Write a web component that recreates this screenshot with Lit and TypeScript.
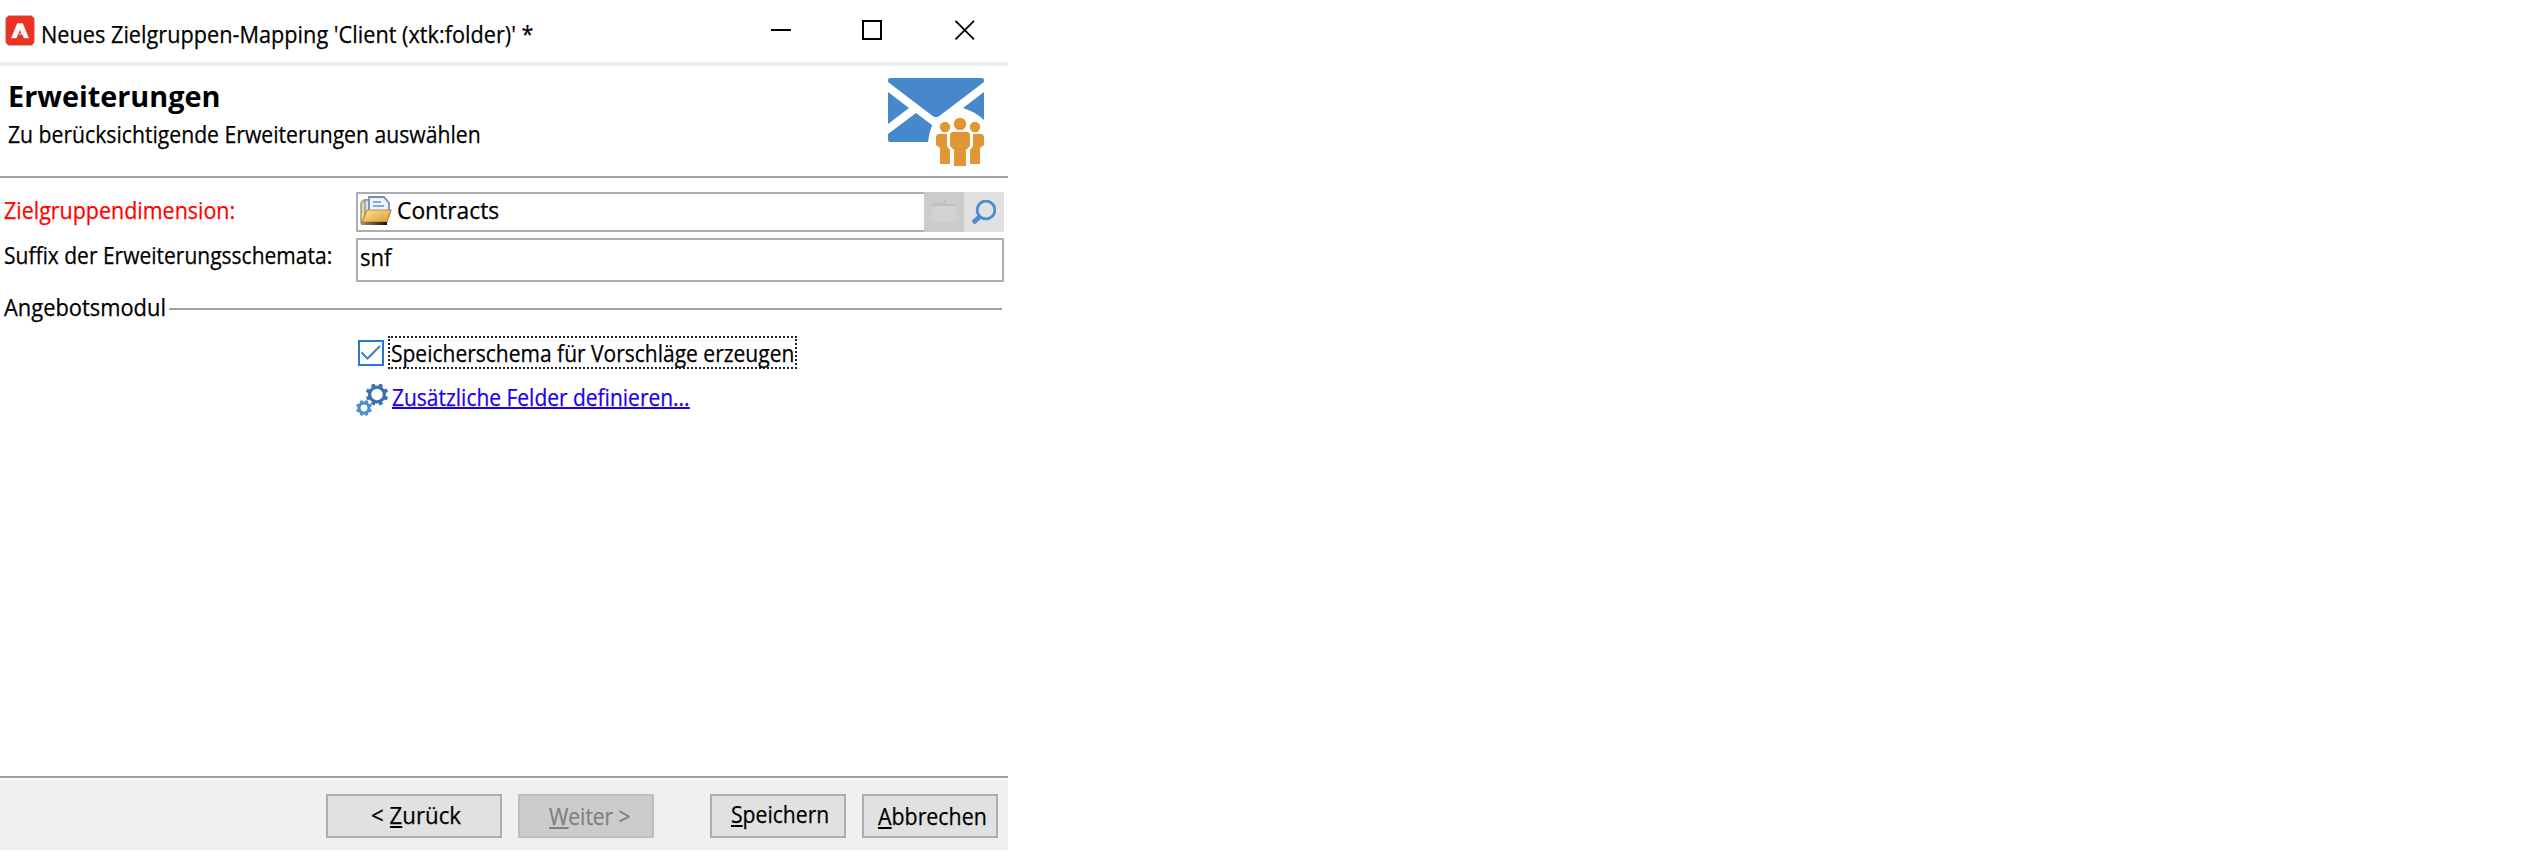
import { LitElement, html, css, svg } from "lit";
import { customElement, property, query } from "lit/decorators.js";

/** One line of text, condensed or widened to an exact measure. */
@customElement("fit-text")
class FitText extends LitElement {
  @property({ type: Number }) measure = 0;
  @query(".line") line!: HTMLElement;

  static styles = css`
    :host { display: block; flex: none; height: 32px; line-height: 32px; white-space: pre; }
    .line { display: inline-block; transform-origin: 0 0; white-space: pre; vertical-align: top; }
  `;

  updated() {
    this.style.width = `${this.measure}px`;
    this.line.style.transform = `scaleX(${this.measure / this.line.offsetWidth})`;
  }

  render() {
    return html`<span class="line"><slot></slot></span>`;
  }
}

const logo = svg`<svg class="logo" width="30" height="31" viewBox="0 0 30 31">
  <rect x="0.5" y="0.5" width="29" height="30" rx="4.500" fill="#ea3323" stroke="#dcaaa4"/>
  <path d="M12.300 8.500h5.400L23.500 23h-4.300l-1.700-3.800h-3.200l2.300-.8-1.600-3.900-3.700 8.500H6.500z" fill="#fff" stroke="#fff" stroke-opacity=".5" stroke-width=".8"/>
</svg>`;

const mail = svg`<svg class="mail" width="96" height="88" viewBox="0 0 96 88">
  <g fill="#4787cb">
    <path d="M2 0h92q2 0 2 2v2L50 39h-4L0 4V2q0-2 2-2z"/>
    <path d="M0 14l21 16L0 46z"/>
    <path d="M96 14L75 30q13 4 21 12z"/>
    <path d="M28 35l16 12q-3 8-4 17H2q-2 0-2-2v-6z"/>
  </g>
  <g fill="#e29535">
    <circle cx="72" cy="46" r="6.2"/><circle cx="57" cy="49" r="5.2"/><circle cx="87" cy="49" r="5.2"/>
    <path d="M64 54h16l2 2v12l-4 4v16H66V72l-4-4V56z"/>
    <path d="M50 56h9v12l3 4v14H52V70l-4-3v-9z"/>
    <path d="M94 56h-9v12l-3 4v14h10V70l4-3v-9z"/>
  </g>
</svg>`;

const folder = svg`<svg class="folder" width="32" height="30" viewBox="0 0 32 30">
  <defs>
    <linearGradient id="g" x1="0" y1="0" x2="1" y2="1"><stop offset="0" stop-color="#ffe696"/><stop offset="1" stop-color="#d59b36"/></linearGradient>
    <linearGradient id="s" x1="0" y1="0" x2="1" y2="0"><stop offset="0" stop-color="#a8905a"/><stop offset="1" stop-color="#16130c"/></linearGradient>
  </defs>
  <path d="M1 7l3-3h5v23H1z" fill="#e9d9a0" stroke="#9f9468" stroke-width="1.4"/>
  <path d="M5 4h6v18H5z" fill="#dfe6f2" stroke="#8797b0" stroke-width="1.4"/>
  <path d="M9 1h15l5 6v13H9z" fill="#eef4fc" stroke="#7d8ca6" stroke-width="1.8"/>
  <path d="M13 6h8M13 10h11" stroke="#86a7e8" stroke-width="1.8"/>
  <path d="M7 14h24l-4 12H2z" fill="url(#g)" stroke="#b98b3c" stroke-width="1.2"/>
  <path d="M1 26h26v3H1z" fill="url(#s)"/>
</svg>`;

const openFolder = svg`<svg width="24" height="24" viewBox="0 0 24 24">
  <path d="M0 2h12V0h2v4h10v2H0z" fill="#c0c0c0"/><path d="M0 2h12v2H0z" fill="#c6c6c6"/>
  <path d="M0 6h24v16H0z" fill="#d2d2d2"/>
</svg>`;

const lens = svg`<svg width="24" height="24" viewBox="0 0 24 24">
  <circle cx="14" cy="10" r="8.900" fill="none" stroke="#4c8cd0" stroke-width="2.8"/>
  <path d="M8.500 16l-7.500 6.800" stroke="#4c8cd0" stroke-width="4.800"/>
</svg>`;

const spokes = (cx: number, cy: number, r: number, w: number) =>
  [0, 1, 2, 3, 4, 5, 6, 7].map(
    (i) => svg`<rect x=${cx - w / 2} y=${cy - r} width=${w} height="4" transform="rotate(${i * 45 + 22.5} ${cx} ${cy})"/>`
  );

const gears = svg`<svg class="gears" width="32" height="32" viewBox="0 0 32 32">
  <g fill="#3b70ae"><circle cx="21" cy="10.5" r="7.4" fill="none" stroke="#3b70ae" stroke-width="3.2"/>${spokes(21, 10.5, 11.2, 3.8)}</g>
  <g fill="#4d8dd0"><circle cx="8" cy="24" r="5" fill="none" stroke="#4d8dd0" stroke-width="3.2"/>${spokes(8, 24, 8, 3)}</g>
</svg>`;

@customElement("app-root")
class AppRoot extends LitElement {
  static styles = css`
    :host { display: block; height: 861px; background: #fff; color: #000; font-family: "Open Sans", "Noto Sans", sans-serif; font-size: 23.5px; -webkit-text-stroke: 0.25px currentColor; }
    * { box-sizing: border-box; }
    svg { display: block; flex: none; }
    .window { width: 1008px; height: 850px; display: flex; flex-direction: column; }
    .title { height: 66px; border-bottom: 4px solid #f0f0f0; display: flex; align-items: flex-start; padding: 15px 33px 0 5px; }
    .title fit-text { margin: 3px auto 0 6px; }
    .controls { display: flex; gap: 71px; padding-top: 5px; }
    .header { height: 112px; border-bottom: 2px solid #a0a0a0; display: flex; justify-content: space-between; padding: 12px 24px 0 7px; }
    .heading { font-weight: 700; font-size: 28px; margin: 2px 0 6px 1px; -webkit-text-stroke: 0; }
    .sub { margin-left: 1px; }
    .form { flex: 1; padding: 14px 4px 0 4px; display: flex; flex-direction: column; }
    .row { display: flex; }
    .row > fit-text { margin-right: auto; }
    .required { color: #f00; margin-top: 2px; }
    .field { width: 648px; display: flex; }
    .box { flex: 1; border: 2px solid #abadb3; display: flex; padding-left: 2px; height: 44px; background: #fff; }
    .box.target { height: 40px; border-right: 0; }
    .folder { margin-top: 2px; }
    .target fit-text { margin-left: 5px; }
    .target { padding-left: 2px; }
    .pick { width: 40px; height: 40px; background: #e1e1e1; display: flex; align-items: center; justify-content: center; }
    .pick.off { background: #ccc; }
    .second { margin-top: 6px; }
    .second > fit-text { margin-top: 1px; }
    .second .box fit-text { margin-top: 1px; }
    .group { display: flex; margin-top: 9px; }
    .rule { flex: 1; height: 2px; background: #a0a0a0; margin: 17px 2px 0 3px; }
    .check { display: flex; margin: 13px 0 0 354px; align-items: center; }
    .focus { margin-left: 4px; width: 409px; height: 33px; border: 2px dotted #222; padding-left: 1px; }
    .focus fit-text { margin-top: -1px; }
    .link { display: flex; margin: 15px 0 0 352px; color: #1c00f0; }
    .link fit-text { margin: -3px 0 0 4px; }
    .uline { border-bottom: 2px solid currentColor; height: 26px; line-height: 32px; display: inline-block; vertical-align: top; }
    .link .uline { height: 28px; }
    .footer { height: 74px; border-top: 2px solid #a0a0a0; padding-top: 2px; }
    .bar { background: #f0f0f0; height: 70px; display: flex; padding: 14px 10px 0 326px; }
    .button { width: 136px; height: 44px; border: 2px solid #adadad; background: #e1e1e1; margin-right: 16px; display: flex; font: inherit; color: inherit; }
    .button .uline { height: 29px; }
    .button.back { width: 176px; padding: 3px 0 0 43px; }
    .button.next { background: #ccc; border-color: #bfbfbf; color: #808080; margin-right: 56px; padding: 4px 0 0 29px; }
    .button.save { padding: 2px 0 0 19px; }
    .button.cancel { padding: 4px 0 0 14px; margin-right: 0; }
  `;

  render() {
    return html`
      <div class="window">
        <div class="title">
          ${logo}
          <fit-text measure="493">Neues Zielgruppen-Mapping 'Client (xtk:folder)' *</fit-text>
          <div class="controls">
            <svg width="20" height="20"><path d="M0 10h20" stroke="#000" stroke-width="2"/></svg>
            <svg width="20" height="20"><rect x="1" y="1" width="18" height="18" fill="none" stroke="#000" stroke-width="2"/></svg>
            <svg width="22" height="20"><path d="M2.500 .8l18.500 18.500M21 .8L2.500 19.300" stroke="#000" stroke-width="1.8"/></svg>
          </div>
        </div>
        <div class="header">
          <div>
            <fit-text class="heading" measure="212">Erweiterungen</fit-text>
            <fit-text class="sub" measure="473">Zu berücksichtigende Erweiterungen auswählen</fit-text>
          </div>
          ${mail}
        </div>
        <div class="form">
          <div class="row">
            <fit-text class="required" measure="231">Zielgruppendimension:</fit-text>
            <div class="field">
              <div class="box target">${folder}<fit-text measure="102">Contracts</fit-text></div>
              <div class="pick off">${openFolder}</div>
              <div class="pick">${lens}</div>
            </div>
          </div>
          <div class="row second">
            <fit-text measure="328">Suffix der Erweiterungsschemata:</fit-text>
            <div class="field"><div class="box"><fit-text measure="32">snf</fit-text></div></div>
          </div>
          <div class="group"><fit-text measure="162">Angebotsmodul</fit-text><div class="rule"></div></div>
          <div class="check">
            <svg width="26" height="26"><rect x="1" y="1" width="24" height="24" fill="#fff" stroke="#2b76cf" stroke-width="2"/><path d="M3.500 12.500l6 6L22 6" fill="none" stroke="#3a80d2" stroke-width="2"/></svg>
            <div class="focus"><fit-text measure="403">Speicherschema für Vorschläge erzeugen</fit-text></div>
          </div>
          <div class="link">${gears}<fit-text measure="298"><span class="uline">Zusätzliche Felder definieren...</span></fit-text></div>
        </div>
        <div class="footer">
          <div class="bar">
            <button class="button back"><fit-text measure="90">&lt; <span class="uline">Z</span>urück</fit-text></button>
            <button class="button next"><fit-text measure="82"><span class="uline">W</span>eiter &gt;</fit-text></button>
            <button class="button save"><fit-text measure="98"><span class="uline">S</span>peichern</fit-text></button>
            <button class="button cancel"><fit-text measure="109"><span class="uline">A</span>bbrechen</fit-text></button>
          </div>
        </div>
      </div>
    `;
  }
}
